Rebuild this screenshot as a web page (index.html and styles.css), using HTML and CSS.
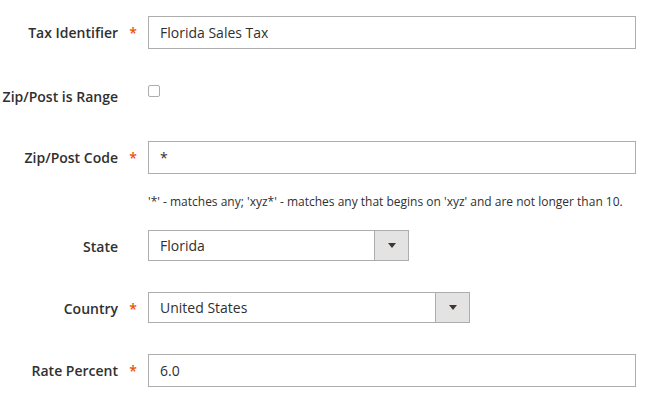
FILE: index.html
```html
<!DOCTYPE html>
<html lang="en">
<head>
    <meta charset="UTF-8">
    <meta name="viewport" content="width=device-width, initial-scale=1.0">
    <title>Tax Rate</title>
    <link rel="stylesheet" href="styles.css">
</head>
<body>
    <form class="tax-form" action="#" method="POST">
        <div class="field field-identifier">
            <label class="field-label" for="code">Tax Identifier</label>
            <span class="star">*</span>
            <div class="control">
                <input type="text" id="code" class="text-input input-wide" value="Florida Sales Tax">
            </div>
        </div>

        <div class="field field-range">
            <label class="field-label" for="zip_is_range">Zip/Post is Range</label>
            <span class="star"></span>
            <div class="control">
                <input type="checkbox" id="zip_is_range" class="checkbox">
            </div>
        </div>

        <div class="field field-zip">
            <label class="field-label" for="postcode">Zip/Post Code</label>
            <span class="star">*</span>
            <div class="control">
                <input type="text" id="postcode" class="text-input input-wide" value="*">
                <div class="note">'*' - matches any; 'xyz*' - matches any that begins on 'xyz' and are not longer than 10.</div>
            </div>
        </div>

        <div class="field field-state">
            <label class="field-label" for="region">State</label>
            <span class="star"></span>
            <div class="control">
                <div class="select-wrap select-state">
                    <select id="region" class="select">
                        <option>Florida</option>
                    </select>
                    <span class="select-arrow"></span>
                </div>
            </div>
        </div>

        <div class="field field-country">
            <label class="field-label" for="country">Country</label>
            <span class="star">*</span>
            <div class="control">
                <div class="select-wrap select-country">
                    <select id="country" class="select">
                        <option>United States</option>
                    </select>
                    <span class="select-arrow"></span>
                </div>
            </div>
        </div>

        <div class="field field-rate">
            <label class="field-label" for="rate">Rate Percent</label>
            <span class="star">*</span>
            <div class="control">
                <input type="text" id="rate" class="text-input input-wide" value="6.0">
            </div>
        </div>
    </form>
</body>
</html>
```

FILE: styles.css
```css
body {
    margin: 0;
    background-color: #fff;
    font-family: "Open Sans", "Liberation Sans", sans-serif;
    color: #303030;
}

.tax-form {
    padding-top: 16px;
}

.field {
    display: flex;
    align-items: flex-start;
}

.field-label {
    width: 118px;
    flex-shrink: 0;
    text-align: right;
    font-size: 14px;
    font-weight: 600;
    line-height: 33px;
    color: #303030;
    white-space: nowrap;
}

.star {
    width: 30px;
    flex-shrink: 0;
    text-align: center;
    color: #eb5202;
    font-size: 14px;
    font-weight: 600;
    line-height: 33px;
}

.control {
    flex: 1;
}

.text-input {
    box-sizing: border-box;
    height: 33px;
    padding: 0 11px;
    border: 1px solid #adadad;
    border-radius: 0;
    font-family: inherit;
    font-size: 14px;
    color: #303030;
    background: #fff;
}

.input-wide {
    width: 488px;
}

.checkbox {
    appearance: none;
    -webkit-appearance: none;
    box-sizing: border-box;
    width: 12px;
    height: 12px;
    margin: 5px 0 0 0;
    border: 1px solid #adadad;
    border-radius: 2px;
    background: #fff;
}

.note {
    margin-top: 19px;
    font-size: 12px;
    line-height: 17px;
    color: #303030;
}

.select-wrap {
    box-sizing: border-box;
    display: flex;
    height: 31px;
    border: 1px solid #adadad;
    background: #fff;
}

.select-state {
    width: 261px;
}

.select-country {
    width: 322px;
}

.select {
    flex: 1;
    appearance: none;
    -webkit-appearance: none;
    border: none;
    background: transparent;
    padding: 0 11px;
    font-family: inherit;
    font-size: 14px;
    color: #303030;
    outline: none;
}

.select-arrow {
    width: 33px;
    flex-shrink: 0;
    border-left: 1px solid #adadad;
    background-color: #e3e3e3;
    display: flex;
    align-items: center;
    justify-content: center;
}

.select-arrow::after {
    content: "";
    width: 0;
    height: 0;
    border-style: solid;
    border-width: 5px 4px 0 4px;
    border-color: #41362f transparent transparent transparent;
}

.field-identifier {
    margin-bottom: 31px;
}

.field-range {
    margin-bottom: 28px;
}

.field-zip {
    margin-bottom: 20px;
}

.field-state {
    margin-bottom: 29px;
}

.field-country {
    margin-bottom: 29px;
}
```
